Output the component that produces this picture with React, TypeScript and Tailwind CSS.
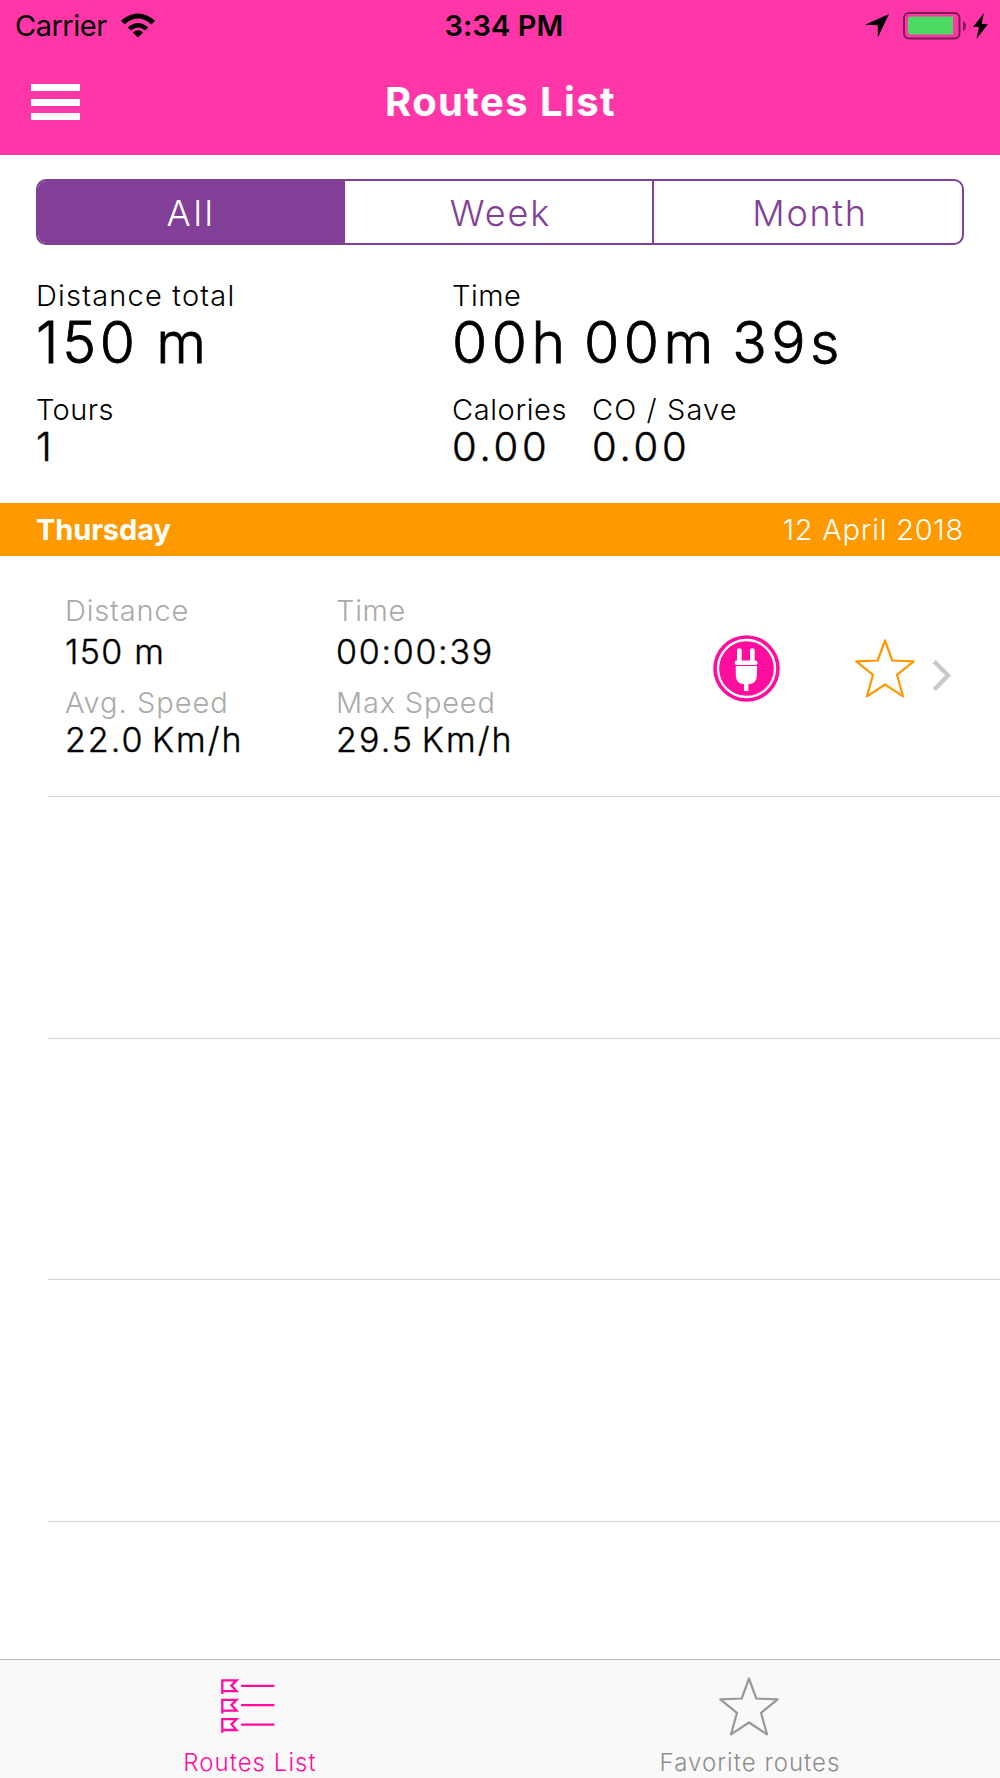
import React from "react";

const STAR = "M30 1.5 L37.3 21.5 L58.7 22.4 L42 35.8 L48 57.3 L30 45.5 L12 57.3 L18 35.8 L1.3 22.4 L22.7 21.5 Z";

function Star({ className }: { className: string }) {
  return (
    <svg viewBox="0 0 60 59" width="60" height="59" fill="none" className={className}>
      <path d={STAR} stroke="currentColor" strokeWidth="2.2" strokeLinejoin="round" />
    </svg>
  );
}

function StatusBar() {
  return (
    <div className="grid h-[50px] grid-cols-3 items-center pl-[15px] pr-[12px] text-[29px] leading-[50px] text-black">
      <div className="flex items-center">
        <span className="pt-px tracking-[-0.5px]">Carrier</span>
        <svg className="ml-[14px]" width="34" height="26" viewBox="0 0 34 26">
          <path d="M17 24.6 L11.8 19.4 Q17 14.9 22.2 19.4 Z" />
          <path d="M6.8 14.4 Q17 5.4 27.2 14.4 L24 17.6 Q17 11.6 10 17.6 Z" />
          <path d="M0 7.8 Q17 -6.8 34 7.8 L30.4 11.4 Q17 -0.2 3.6 11.4 Z" />
        </svg>
      </div>
      <span className="pl-[5px] pt-px text-center font-semibold tracking-[0.1px]">3:34 PM</span>
      <div className="flex items-center justify-end">
        <svg width="24" height="24" viewBox="0 0 24 24">
          <path d="M24 0 L12.8 23.6 V11.2 L0 10.8 Z" />
        </svg>
        <svg className="ml-[14px]" width="64" height="28" viewBox="0 0 64 28">
          <rect x="1" y="1" width="55.5" height="25.5" rx="5" fill="none" stroke="#000" strokeOpacity=".5" strokeWidth="2" />
          <path d="M8 4.5 H50 V22.5 H8 Q5 22.5 5 19.5 V7.5 Q5 4.5 8 4.5 Z" fill="#4cd964" />
          <path d="M60 9 Q63 10.5 63 14 Q63 17.5 60 19 Z" fillOpacity=".5" />
        </svg>
        <svg className="ml-[6px]" width="15" height="26" viewBox="0 0 15 26">
          <path d="M11 0 L0 14 H6 L3.4 26 L15 11 H8.6 Z" />
        </svg>
      </div>
    </div>
  );
}

function NavBar() {
  return (
    <div className="grid h-[105px] grid-cols-[200px_1fr_200px] items-center pb-[2px]">
      <button aria-label="Menu" className="ml-[31px] mt-px flex w-[49px] flex-col gap-[7.5px]">
        <span className="h-[7px] bg-white" />
        <span className="h-[7px] bg-white" />
        <span className="h-[7px] bg-white" />
      </button>
      <h1 className="pl-px text-center text-[40px] leading-[50px] font-bold tracking-[1.4px] text-white">Routes List</h1>
    </div>
  );
}

function Segments() {
  return (
    <div className="mx-9 mt-6 grid h-[66px] grid-cols-[307px_307px_1fr] overflow-hidden rounded-[10px] border-2 border-[#823f98] text-center text-[36px] leading-[64px] font-light text-[#823f98]">
      <span className="bg-[#823f98] pr-px tracking-[2.6px] text-white">All</span>
      <span className="pl-1 tracking-[1.9px]">Week</span>
      <span className="border-l-2 border-[#823f98] pl-1 tracking-[1.7px]">Month</span>
    </div>
  );
}

function Totals() {
  return (
    <section className="mt-[33px] grid h-[225px] grid-cols-[416px_1fr] content-start gap-y-5 pl-9 font-light text-black">
      <div>
        <div className="text-[29px] leading-[35px] tracking-[1.19px]">Distance total</div>
        <div className="text-[57px] leading-[59px] tracking-[3.7px] [word-spacing:-2px] [-webkit-text-stroke:0.8px]">150 m</div>
      </div>
      <div>
        <div className="text-[29px] leading-[35px] tracking-[0.5px]">Time</div>
        <div className="text-[57px] leading-[59px] tracking-[4.5px] [word-spacing:-6px] [-webkit-text-stroke:0.8px]">00h 00m 39s</div>
      </div>
      <div>
        <div className="text-[29px] leading-[35px] tracking-[0.4px]">Tours</div>
        <div className="text-[40px] leading-[39px] [-webkit-text-stroke:0.5px]">1</div>
      </div>
      <div className="grid grid-cols-[140px_1fr]">
        <div>
          <div className="text-[29px] leading-[35px] tracking-[0.6px]">Calories</div>
          <div className="text-[40px] leading-[39px] tracking-[3.8px] [-webkit-text-stroke:0.5px]">0.00</div>
        </div>
        <div>
          <div className="text-[29px] leading-[35px] tracking-[1.1px]">CO / Save</div>
          <div className="text-[40px] leading-[39px] tracking-[3.8px] [-webkit-text-stroke:0.5px]">0.00</div>
        </div>
      </div>
    </section>
  );
}

function RouteRow() {
  return (
    <div className="flex h-[240px] font-light">
      <div className="w-[272px] pl-[17px] pt-[37px]">
        <div className="text-[29px] leading-[35px] tracking-[0.84px] text-[#aaa]">Distance</div>
        <div className="mt-1 text-[34px] leading-[39px] tracking-[1.3px] [-webkit-text-stroke:0.4px]">150 m</div>
        <div className="mt-[14px] text-[29px] leading-[35px] tracking-[1px] text-[#aaa]">Avg. Speed</div>
        <div className="mt-px text-[34px] leading-[38px] tracking-[2px] [word-spacing:-4px] [-webkit-text-stroke:0.4px]">22.0 Km/h</div>
      </div>
      <div className="w-[376px] pl-[16px] pt-[37px]">
        <div className="text-[29px] leading-[35px] tracking-[0.7px] text-[#aaa]">Time</div>
        <div className="mt-1 text-[34px] leading-[39px] tracking-[1.7px] [-webkit-text-stroke:0.4px]">00:00:39</div>
        <div className="mt-[14px] text-[29px] leading-[35px] tracking-[0.8px] text-[#aaa]">Max Speed</div>
        <div className="mt-px text-[34px] leading-[38px] tracking-[2.1px] [word-spacing:-4px] [-webkit-text-stroke:0.4px]">29.5 Km/h</div>
      </div>
      <svg className="ml-[17px] mt-[79px]" width="67" height="67" viewBox="0 0 67 67">
        <circle cx="33.5" cy="33.5" r="33.3" fill="#ff0d9d" />
        <circle cx="33.5" cy="33.5" r="28.5" fill="none" stroke="#fff" strokeWidth="2.3" />
        <g fill="#fff">
          <rect x="24" y="13.3" width="4.7" height="14" rx="2.2" />
          <rect x="37" y="13.3" width="4.7" height="14" rx="2.2" />
          <rect x="21.8" y="25.6" width="22.6" height="4.4" rx="1.8" />
          <path d="M22.8 31 H44 V40 Q43.8 49 35.4 49.3 V56 H31 V49.3 Q23 49 22.8 40 Z" />
        </g>
      </svg>
      <Star className="ml-[75px] mt-[83px] text-[#ff9800]" />
      <svg className="ml-[17px] mt-[103px]" width="20" height="33" viewBox="0 0 20 33" fill="none">
        <path d="M2.2 2.5 L16.2 16.5 L2.2 30.5" stroke="#c7c7cc" strokeWidth="4.2" />
      </svg>
    </div>
  );
}

function TabBar() {
  return (
    <nav className="grid h-[119px] grid-cols-2 border-t border-[#b8b8b8] bg-[#f9f9f9] text-[24px] leading-[30px] font-light">
      <div className="flex flex-col items-center pt-[18px] text-[#ff0d9d]">
        <svg className="mr-[5px]" width="54" height="59" viewBox="0 0 54 59" fill="none" stroke="currentColor" strokeWidth="2.3">
          {[1, 20.4, 39.8].map((y) => (
            <g key={y} transform={`translate(0 ${y})`}>
              <path d="M1.3 15 V1.4 H15.5 L10.5 6.6 L15.5 12.2 H1.3" />
              <path d="M21 6.8 H52.5" strokeLinecap="round" />
            </g>
          ))}
        </svg>
        <span className="mt-[11px] tracking-[1.05px]">Routes List</span>
      </div>
      <div className="flex flex-col items-center pt-[17px] text-[#8e8e8e]">
        <Star className="mr-[2px] text-[#999]" />
        <span className="mt-[12px] tracking-[1.03px]">Favorite routes</span>
      </div>
    </nav>
  );
}

export default function App() {
  return (
    <main className="flex h-[1778px] w-[1000px] flex-col overflow-hidden bg-white font-[Inter,sans-serif]">
      <header className="bg-[#ff36a8]">
        <StatusBar />
        <NavBar />
      </header>
      <Segments />
      <Totals />
      <div className="flex h-[53px] items-center justify-between bg-[#ff9900] px-9 pt-px text-[29px] text-white">
        <span className="font-bold tracking-[-0.1px]">Thursday</span>
        <span className="font-light tracking-[0.75px]">12 April 2018</span>
      </div>
      <div className="flex-1 pl-12">
        <div className="border-b border-[#d4d4d6]">
          <RouteRow />
        </div>
        <div className="h-[242px] border-b border-[#d4d4d6]" />
        <div className="h-[241px] border-b border-[#d4d4d6]" />
        <div className="h-[242px] border-b border-[#d4d4d6]" />
      </div>
      <TabBar />
    </main>
  );
}
